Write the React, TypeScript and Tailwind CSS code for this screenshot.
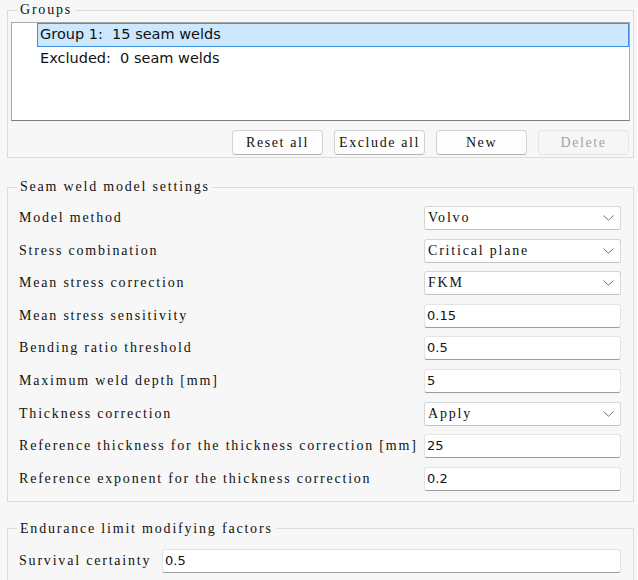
import type { ReactNode } from 'react';

// SimSun-like look: a serif face spread out to the fixed pitch of the original
const SERIF = "[font-family:'Liberation_Serif','Times_New_Roman',serif] text-[14px] tracking-[1.8px] text-[#111]";
const SANS = "[font-family:'DejaVu_Sans','Noto_Sans',sans-serif] text-[#111]";

type Setting = { label: string; kind: 'select' | 'input'; value: string };

const settings: Setting[] = [
  { label: 'Model method', kind: 'select', value: 'Volvo' },
  { label: 'Stress combination', kind: 'select', value: 'Critical plane' },
  { label: 'Mean stress correction', kind: 'select', value: 'FKM' },
  { label: 'Mean stress sensitivity', kind: 'input', value: '0.15' },
  { label: 'Bending ratio threshold', kind: 'input', value: '0.5' },
  { label: 'Maximum weld depth [mm]', kind: 'input', value: '5' },
  { label: 'Thickness correction', kind: 'select', value: 'Apply' },
  { label: 'Reference thickness for the thickness correction [mm]', kind: 'input', value: '25' },
  { label: 'Reference exponent for the thickness correction', kind: 'input', value: '0.2' },
];

function Chevron() {
  return (
    <svg width="11" height="6" viewBox="0 0 11 6" className="text-[#707070]">
      <path d="M0.5 0.5 L5.5 5.2 L10.5 0.5" fill="none" stroke="currentColor" strokeWidth="1" />
    </svg>
  );
}

function Combo({ value }: { value: string }) {
  return (
    <div className="flex h-[24px] items-center justify-between rounded-[3px] border border-[#d6d6d6] border-b-[#c2c2c2] bg-white pl-[3px] pr-[6px]">
      <span className={`${SERIF} whitespace-pre leading-[14px]`}>{value}</span>
      <Chevron />
    </div>
  );
}

function Field({ value }: { value: string }) {
  return (
    <div className="flex h-[24px] items-center rounded-[3px] border border-[#e4e4e4] border-b-[#9c9c9c] bg-white pl-[2px]">
      <span className={`${SANS} text-[13px] leading-[16px]`}>{value}</span>
    </div>
  );
}

function Group({ title, className, children }: { title: string; className?: string; children: ReactNode }) {
  return (
    <fieldset className={`border border-[#dcdcdc] ${className ?? ''}`}>
      <legend className={`${SERIF} ml-[9px] px-[3px] leading-[14px]`}>{title}</legend>
      {children}
    </fieldset>
  );
}

function Button({ label, disabled }: { label: string; disabled?: boolean }) {
  return (
    <button
      disabled={disabled}
      className={
        disabled
          ? "h-[25px] w-[91px] rounded-[4px] border border-[#e6e6e6] bg-[#f6f6f6] [font-family:'Liberation_Serif','Times_New_Roman',serif] text-[14px] tracking-[1.6px] text-[#a3a3a3]"
          : "h-[25px] w-[91px] rounded-[4px] border border-[#d2d2d2] border-b-[#b4b4b4] bg-[#fdfdfd] [font-family:'Liberation_Serif','Times_New_Roman',serif] text-[14px] tracking-[1.6px] text-[#111]"
      }
    >
      {label}
    </button>
  );
}

export default function App() {
  return (
    <div className="min-h-screen bg-[#f7f7f7] pl-[7px] pr-[4px] pt-[3px]">
      {/* Groups */}
      <Group title="Groups">
        <div className="px-[3px] pb-[2px] pt-[5px]">
          <div className="h-[99px] border border-[#a9a9a9] border-b-[#7d7d7d] bg-white">
            <div className={`${SANS} ml-[25px] flex h-[24px] items-center border border-[#3f90e0] bg-[#cce8ff] pl-[2px] text-[14.5px] whitespace-pre`}>
              Group 1:  15 seam welds
            </div>
            <div className={`${SANS} ml-[25px] flex h-[24px] items-center pl-[3px] text-[14.5px] whitespace-pre`}>
              Excluded:  0 seam welds
            </div>
          </div>
          <div className="mt-[9px] flex justify-end gap-[11px] pr-[1px]">
            <Button label="Reset all" />
            <Button label="Exclude all" />
            <Button label="New" />
            <Button label="Delete" disabled />
          </div>
        </div>
      </Group>

      {/* Seam weld model settings */}
      <Group title="Seam weld model settings" className="mt-[22px]">
        <div className="grid grid-cols-[397px_1fr] items-center gap-x-[8px] gap-y-[8.6px] pb-[10px] pl-[11px] pr-[12px] pt-[12px]">
          {settings.map((s) => (
            <div key={s.label} className="contents">
              <span className={`${SERIF} whitespace-pre leading-[14px]`}>{s.label}</span>
              {s.kind === 'select' ? <Combo value={s.value} /> : <Field value={s.value} />}
            </div>
          ))}
        </div>
      </Group>

      {/* Endurance limit modifying factors */}
      <Group title="Endurance limit modifying factors" className="mt-[20px]">
        <div className="flex items-center gap-[7px] pb-[10px] pl-[11px] pr-[12px] pt-[13px]">
          <span className={`${SERIF} w-[136px] whitespace-pre leading-[14px]`}>Survival certainty</span>
          <div className="flex-1">
            <Field value="0.5" />
          </div>
        </div>
      </Group>
    </div>
  );
}
